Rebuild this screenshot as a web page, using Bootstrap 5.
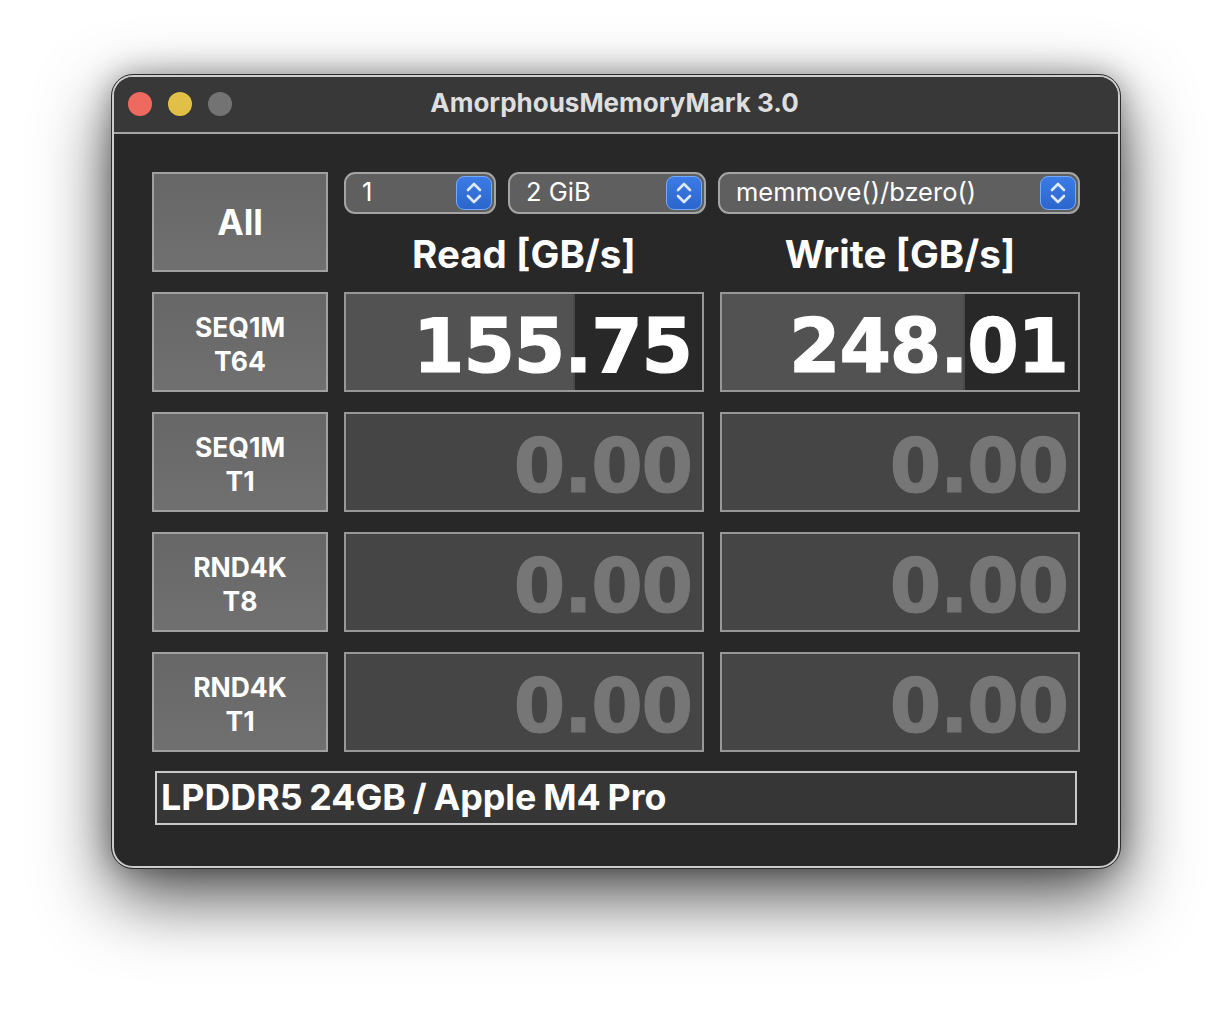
<!DOCTYPE html>
<html lang="en">
<head>
<meta charset="utf-8">
<title>AmorphousMemoryMark 3.0</title>
<link href="https://cdn.jsdelivr.net/npm/bootstrap@5.3.0/dist/css/bootstrap.min.css" rel="stylesheet">
<style>
html,body{height:100%;}
body{background:#fff;font-family:Inter,"Liberation Sans",sans-serif;padding-top:75px;overflow:hidden;}
.mac-window{width:1008px;height:793px;background:#282828;border-radius:21px;box-shadow:0 28px 72px rgba(0,0,0,.7),0 0 30px rgba(0,0,0,.34);border:2px solid #cdcdcd;outline:1px solid #2c2c2c;outline-offset:0;overflow:hidden;}
.mac-title{height:57px;background:#383838;border-bottom:2px solid #a6a6a6;padding:0 0 1px 14px;}
.mac-title h1{font-size:26px;font-weight:700;color:#dedede;margin:-1.5px 0 0 -1.5px;letter-spacing:0;line-height:1;}
.tl-dot{width:24px;height:24px;border-radius:50%;}
.tl-red{background:#ee6a5e;}.tl-yellow{background:#e0c047;}.tl-grey{background:#737373;}
.mark-grid{display:grid;grid-template-columns:176px 360px 360px;column-gap:16px;row-gap:20px;padding:38px 0 0 38px;}
.mark-btn.btn{background:linear-gradient(#676767,#707070);border:2px solid #a0a0a0;border-radius:0;color:#fff;font-weight:700;font-size:26.5px;line-height:34px;padding:3px 0 0;height:100px;--bs-btn-hover-color:#fff;}
.mark-btn.btn.is-all{font-size:35.5px;padding-top:2px;}
.head-col{grid-column:span 2;height:100px;}
.sel-row{display:flex;gap:12px;}
.sel-wrap{position:relative;}
.sel-wrap.w1{width:152px}.sel-wrap.w2{width:198px}.sel-wrap.w3{width:362px}
.sel-wrap .form-select{height:42px;background:#5f5f5f;border:2px solid #a4a4a4;border-radius:11px;color:#fff;font-size:25.5px;line-height:1;padding:0 0 2px 16px;box-shadow:none;}
.stepper{position:absolute;right:4px;top:4px;width:36px;height:34px;border-radius:8px;background:linear-gradient(#3b7be6,#2b66cc);border:1.5px solid #74aaf8;display:flex;align-items:center;justify-content:center;pointer-events:none;}
.col-heads{display:grid;grid-template-columns:360px 360px;column-gap:16px;}
.col-heads div{color:#fff;font-weight:700;font-size:38.5px;line-height:1;text-align:center;padding-top:21px;}
.score{height:100px;background:#454545;border:2px solid #979797;color:#fff;font-family:"DejaVu Sans",sans-serif;font-weight:700;font-size:74px;line-height:1;letter-spacing:-1.1px;-webkit-text-stroke:1.2px currentColor;display:flex;align-items:center;justify-content:flex-end;padding:8px 10px 0 0;}
.score.zero{color:#767676;}
.score.filled{background:linear-gradient(to right,#525252 var(--fill),#4a4a4a var(--fill),#4a4a4a calc(var(--fill) + 2px),#282828 calc(var(--fill) + 2px));}
.comment-box{margin:19px 0 0 41px;width:922px;height:54px;background:#363636;border:2px solid #c8c8c8;color:#fff;font-weight:700;font-size:35.8px;word-spacing:-1.7px;line-height:48px;padding-left:4px;white-space:nowrap;}
</style>
</head>
<body>
<div class="mac-window mx-auto">
  <div class="mac-title position-relative d-flex align-items-center gap-3">
    <span class="tl-dot tl-red"></span><span class="tl-dot tl-yellow"></span><span class="tl-dot tl-grey"></span>
    <h1 class="position-absolute top-50 start-50 translate-middle text-nowrap">AmorphousMemoryMark 3.0</h1>
  </div>
  <div class="mark-grid">
    <button class="btn mark-btn is-all" type="button">All</button>
    <div class="head-col">
      <div class="sel-row">
        <div class="sel-wrap w1"><select class="form-select"><option>1</option></select><span class="stepper"><svg width="20" height="26" viewBox="0 0 20 26" fill="none" stroke="#dfe9fb" stroke-width="2.6" stroke-linecap="round" stroke-linejoin="round"><path d="M4 10 10 4l6 6M4 16l6 6 6-6"/></svg></span></div>
        <div class="sel-wrap w2"><select class="form-select"><option>2 GiB</option></select><span class="stepper"><svg width="20" height="26" viewBox="0 0 20 26" fill="none" stroke="#dfe9fb" stroke-width="2.6" stroke-linecap="round" stroke-linejoin="round"><path d="M4 10 10 4l6 6M4 16l6 6 6-6"/></svg></span></div>
        <div class="sel-wrap w3"><select class="form-select"><option>memmove()/bzero()</option></select><span class="stepper"><svg width="20" height="26" viewBox="0 0 20 26" fill="none" stroke="#dfe9fb" stroke-width="2.6" stroke-linecap="round" stroke-linejoin="round"><path d="M4 10 10 4l6 6M4 16l6 6 6-6"/></svg></span></div>
      </div>
      <div class="col-heads"><div>Read [GB/s]</div><div>Write [GB/s]</div></div>
    </div>

    <button class="btn mark-btn" type="button">SEQ1M<br>T64</button>
    <div class="score filled" style="--fill:63.8%">155.75</div>
    <div class="score filled" style="--fill:67.6%">248.01</div>

    <button class="btn mark-btn" type="button">SEQ1M<br>T1</button>
    <div class="score zero">0.00</div>
    <div class="score zero">0.00</div>

    <button class="btn mark-btn" type="button">RND4K<br>T8</button>
    <div class="score zero">0.00</div>
    <div class="score zero">0.00</div>

    <button class="btn mark-btn" type="button">RND4K<br>T1</button>
    <div class="score zero">0.00</div>
    <div class="score zero">0.00</div>
  </div>
  <div class="comment-box">LPDDR5 24GB / Apple M4 Pro</div>
</div>
<script src="https://cdn.jsdelivr.net/npm/bootstrap@5.3.0/dist/js/bootstrap.bundle.min.js"></script>
</body>
</html>
